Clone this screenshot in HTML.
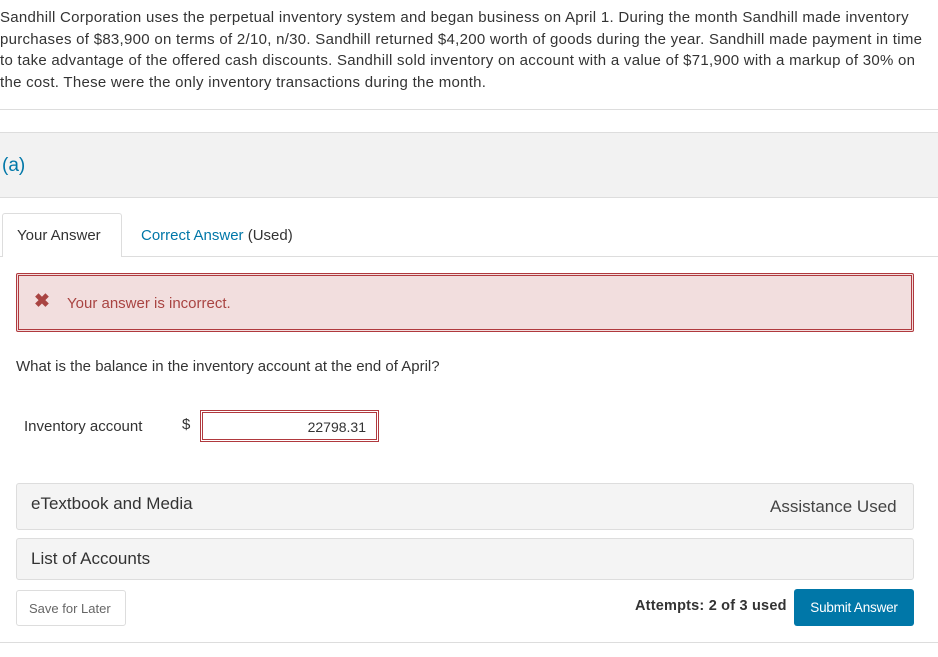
<!DOCTYPE html>
<html><head><style>
body{margin:0;width:938px;height:657px;background:#fff;font-family:"Liberation Sans",sans-serif;color:#333;position:relative;overflow:hidden}
div{position:absolute;box-sizing:border-box}
.p{left:0;top:7px;width:938px;font-size:15px;line-height:21.7px;color:#333;white-space:nowrap;letter-spacing:0.28px}
</style></head><body>
<div class="p">Sandhill Corporation uses the perpetual inventory system and began business on April 1. During the month Sandhill made inventory<br>purchases of $83,900 on terms of 2/10, n/30. Sandhill returned $4,200 worth of goods during the year. Sandhill made payment in time<br>to take advantage of the offered cash discounts. Sandhill sold inventory on account with a value of $71,900 with a markup of 30% on<br>the cost. These were the only inventory transactions during the month.</div>
<div style="left:0;top:109px;width:938px;height:1px;background:#ddd"></div>
<div style="left:0;top:132px;width:938px;height:66px;background:#f2f2f2;border-top:1px solid #ddd;border-bottom:1px solid #ddd"></div>
<div style="left:2px;top:155px;font-size:19px;color:#0077a8">(a)</div>
<div style="left:0;top:256px;width:938px;height:1px;background:#ddd"></div>
<div style="left:2px;top:213px;width:120px;height:44px;border:1px solid #ddd;border-bottom:none;background:#fff;border-radius:3px 3px 0 0"></div>
<div style="left:17px;top:227px;font-size:15px;color:#333">Your Answer</div>
<div style="left:141px;top:227px;font-size:15px;color:#0077a8">Correct Answer <span style="color:#333">(Used)</span></div>
<div style="left:16px;top:273px;width:898px;height:59px;border:3px double #b0393e;background:#f2dede;border-radius:2px"></div>
<div style="left:34px;top:290px;font-size:19px;font-weight:bold;color:#a94442">✖</div>
<div style="left:67px;top:295px;font-size:15px;color:#a94442">Your answer is incorrect.</div>
<div style="left:16px;top:358px;font-size:15px">What is the balance in the inventory account at the end of April?</div>
<div style="left:24px;top:418px;font-size:15px">Inventory account</div>
<div style="left:182px;top:416px;font-size:15px">$</div>
<div style="left:200px;top:410px;width:179px;height:32px;border:3px double #b0393e;background:#fff;font-size:14px;text-align:right;padding:6px 10px 0 0">22798.31</div>
<div style="left:16px;top:483px;width:898px;height:47px;background:#f4f4f4;border:1px solid #ddd;border-radius:3px"></div>
<div style="left:31px;top:494px;font-size:17px">eTextbook and Media</div>
<div style="left:770px;top:497px;font-size:17px;color:#444">Assistance Used</div>
<div style="left:16px;top:538px;width:898px;height:42px;background:#f4f4f4;border:1px solid #ddd;border-radius:3px"></div>
<div style="left:31px;top:549px;font-size:17px">List of Accounts</div>
<div style="left:16px;top:590px;width:110px;height:36px;border:1px solid #ddd;border-radius:3px;font-size:13px;color:#666;padding:10px 0 0 12px">Save for Later</div>
<div style="left:635px;top:598px;font-size:14.5px;font-weight:bold;color:#333;letter-spacing:0.2px">Attempts: 2 of 3 used</div>
<div style="left:794px;top:589px;width:120px;height:37px;background:#0077a8;border-radius:3px;color:#fff;font-size:13.5px;text-align:center;padding-top:11px;letter-spacing:-0.2px">Submit Answer</div>
<div style="left:0;top:642px;width:938px;height:1px;background:#ddd"></div>
</body></html>
